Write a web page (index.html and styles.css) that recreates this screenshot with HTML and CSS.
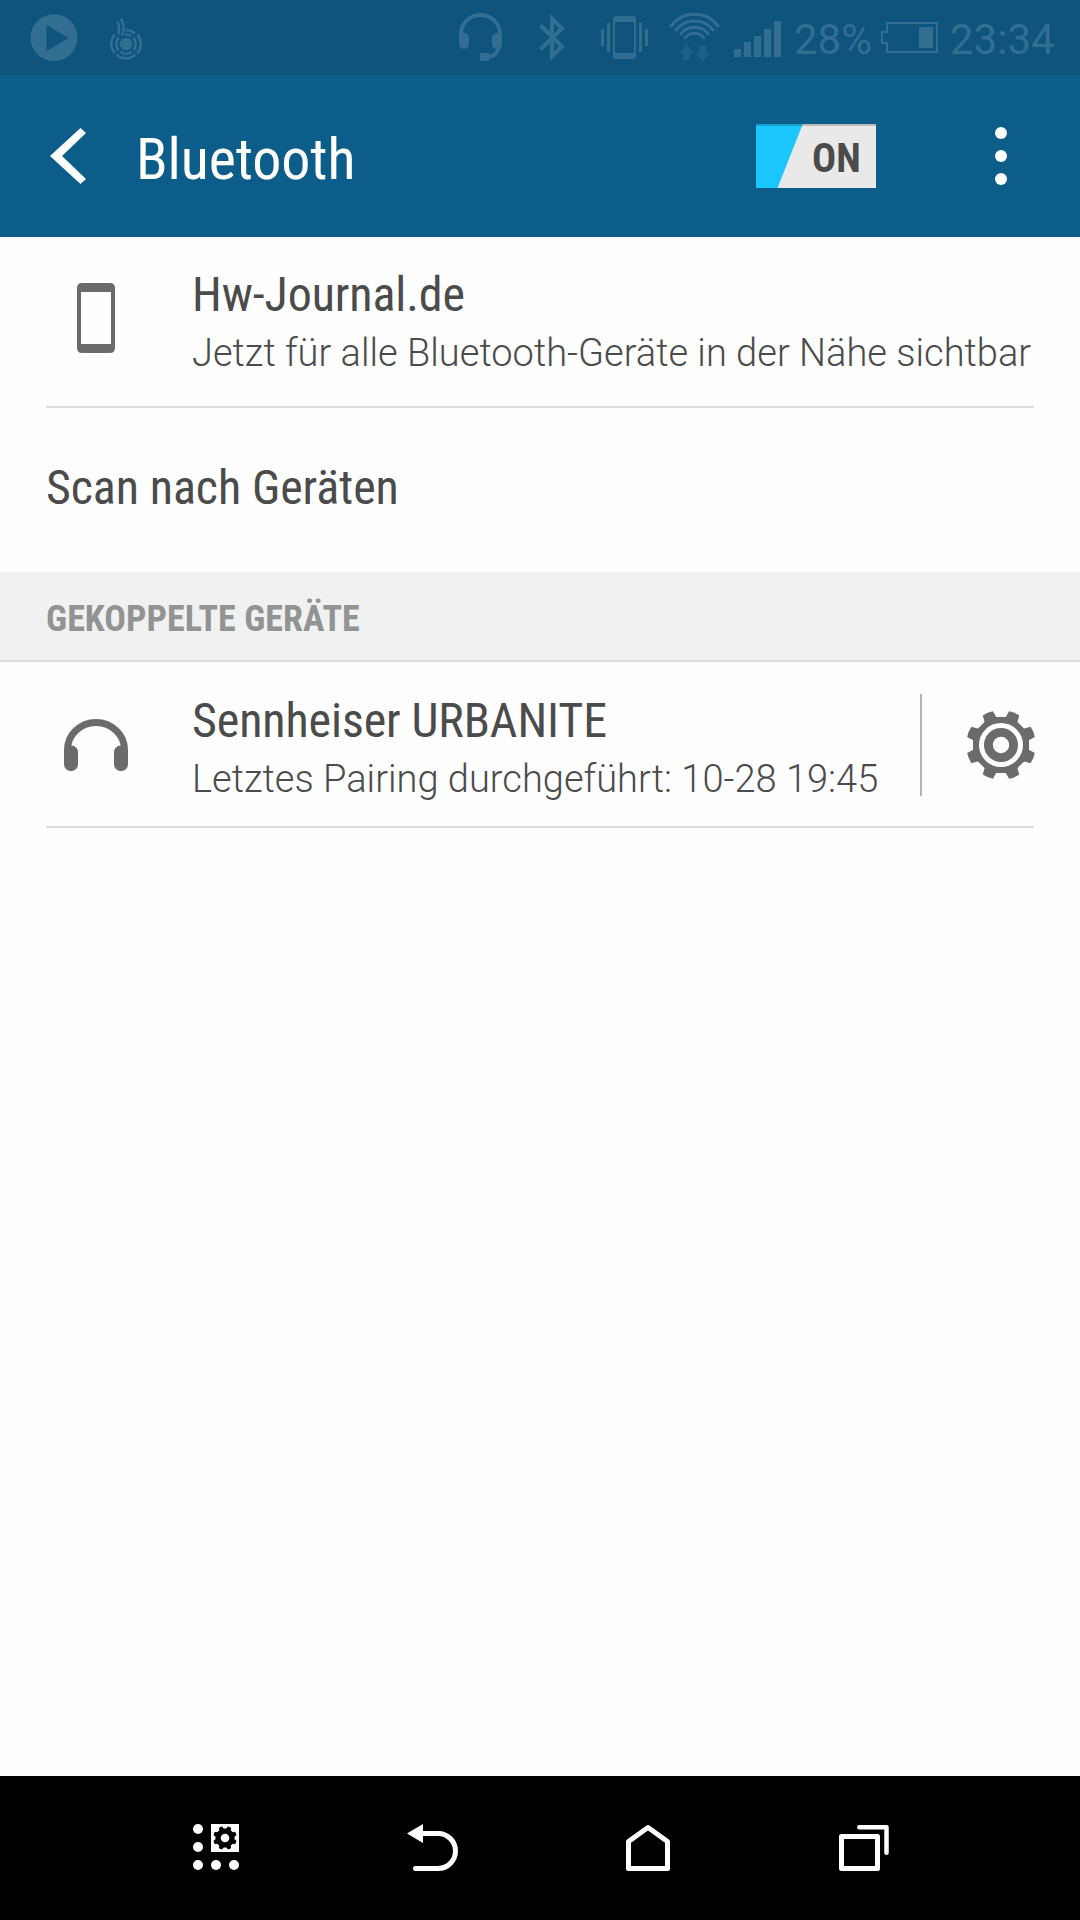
FILE: index.html
```html
<!doctype html>
<html lang="de">
  <head>
    <meta charset="utf-8">
    <meta name="viewport" content="width=device-width, initial-scale=1">
    <title>Bluetooth</title>
    <link rel="stylesheet" href="styles.css">
  </head>
  <body>
    <div class="status-bar">
      <svg class="play" width="48" height="75" viewBox="0 0 48 75">
        <path fill-rule="evenodd" d="M24 14.2a23.5 23.5 0 1 0 0 47a23.5 23.5 0 1 0 0-47zM16.5 25v26L38.5 38z"/>
      </svg>
      <svg class="burn" width="32" height="75" viewBox="0 0 32 75">
        <circle cx="16" cy="44" r="6.3"/>
        <g class="line ring">
          <path d="M8.600 37.700a9.700 9.700 0 0 0 0 12.600M10.200 51.800a9.700 9.700 0 0 0 11.600 0M23.400 50.300a9.700 9.700 0 0 0 0-12.600M15 34.600a9.700 9.700 0 0 1 6.400 1.200"/>
          <path d="M4.700 34.700a14.200 14.200 0 0 0 0 18.600M6.600 54.700a14.200 14.200 0 0 0 18.800 0M27.300 53.300a14.200 14.200 0 0 0 0-18.600M16 30a14.200 14.200 0 0 1 9 3.300"/>
          <path d="M7 21.500q3.500 5.500 1.300 12.500M10.800 18.500q5 8 1.200 17"/>
        </g>
      </svg>
      <div class="status-right">
        <svg class="headset" width="43" height="75" viewBox="0 0 43 75">
          <path class="line" d="M2 37v-3a19.5 19 0 0 1 39 0v9q-2 13-12 14"/>
          <rect x="0" y="33" width="10" height="16" rx="5"/>
          <rect x="33" y="33" width="10" height="16" rx="5"/>
          <rect x="21" y="53" width="9" height="8"/>
        </svg>
        <svg class="bt" width="27" height="75" viewBox="0 0 27 75">
          <path class="line" d="M1.5 25.5L23 46.500 13 56.500V18.500L23 28.500 1.500 49.500"/>
        </svg>
        <svg class="vibrate" width="47" height="75" viewBox="0 0 47 75">
          <path fill-rule="evenodd" d="M15 16h17q3 0 3 3v37q0 3-3 3H15q-3 0-3-3V19q0-3 3-3zM14 22v31h19V22z"/>
          <path d="M0 29h3v17H0zM6 23h3v29H6zM38 23h3v29h-3zM44 29h3v17h-3z"/>
        </svg>
        <svg class="wifi" width="51" height="75" viewBox="0 0 51 75">
          <path class="line thin" d="M1.300 27A29.500 29.500 0 0 1 49.700 27M6.300 31A23.300 23.300 0 0 1 44.700 31M11.200 34.800A17.400 17.400 0 0 1 39.800 34.800M15.500 38.500A12 12 0 0 1 35.500 38.500"/>
          <path class="dim" d="M17.700 44L25 53h-3.700v7H14v-7h-3.700zM30 46h7v7h4l-7.500 9-7.200-9H30z"/>
        </svg>
        <svg class="signal" width="47" height="75" viewBox="0 0 47 75">
          <path d="M0 49h7v8H0zM10 42h7v15h-7zM20 36h7v21h-7zM30 29h7v28h-7zM40 21h7v36h-7z"/>
        </svg>
        <span class="percent">28%</span>
        <svg class="battery" width="57" height="75" viewBox="0 0 57 75">
          <path class="line hair" d="M6 23h50v29H6v-9H1V32h5z"/>
          <path d="M38 27h14v21H38z"/>
        </svg>
        <span class="clock">23:34</span>
      </div>
    </div>

    <header>
      <svg class="back" width="36" height="56" viewBox="0 0 36 56">
        <path d="M0 28L30.500 0 36 5 12 28l24 23-5.500 5z"/>
      </svg>
      <h1>Bluetooth</h1>
      <div class="toggle"><span>ON</span></div>
      <svg class="more" width="12" height="58" viewBox="0 0 12 58">
        <circle cx="6" cy="6" r="6"/>
        <circle cx="6" cy="29" r="6"/>
        <circle cx="6" cy="52" r="6"/>
      </svg>
    </header>

    <main>
      <div class="row">
        <div class="icon">
          <svg width="38" height="70" viewBox="0 0 38 70">
            <path fill-rule="evenodd" d="M5 0h28q5 0 5 5v60q0 5-5 5H5q-5 0-5-5V5q0-5 5-5zM4 9v52h30V9z"/>
          </svg>
        </div>
        <div class="text">
          <div class="name">Hw-Journal.de</div>
          <div class="sub">Jetzt für alle Bluetooth-Geräte in der Nähe sichtbar</div>
        </div>
      </div>

      <div class="scan name">Scan nach Geräten</div>

      <h2>GEKOPPELTE GERÄTE</h2>

      <div class="row paired">
        <div class="icon">
          <svg width="64" height="52" viewBox="0 0 64 52">
            <path fill="none" stroke="#6b6b6b" stroke-width="7" d="M3.500 34v-3a28.500 27.500 0 0 1 57 0v3"/>
            <rect x="0" y="26.500" width="14" height="25.500" rx="6.500"/>
            <rect x="50" y="26.500" width="14" height="25.500" rx="6.500"/>
          </svg>
        </div>
        <div class="text">
          <div class="name">Sennheiser URBANITE</div>
          <div class="sub">Letztes Pairing durchgeführt: 10-28 19:45</div>
        </div>
        <div class="settings">
          <svg width="70" height="70" viewBox="-35 -35 70 70">
            <defs>
              <path id="teeth" d="M-5.500-34.300Q0-35.500 5.500-34.300L6.500-26 6.500 26 5.500 34.300Q0 35.500-5.500 34.300L-6.500 26-6.500-26z"/>
            </defs>
            <g id="cog">
              <use href="#teeth" transform="rotate(22.500)"/>
              <use href="#teeth" transform="rotate(67.500)"/>
              <use href="#teeth" transform="rotate(112.500)"/>
              <use href="#teeth" transform="rotate(157.500)"/>
              <path d="M-11.500-28h23L28-11.500v23L11.500 28h-23L-28 11.500v-23z"/>
            </g>
            <circle r="19.500" fill="#6b6b6b" stroke="#fff" stroke-width="5"/>
            <circle r="8.200" fill="#fff"/>
          </svg>
        </div>
      </div>
    </main>

    <nav>
      <svg width="72" height="72" viewBox="0 0 72 72">
        <circle cx="18" cy="17" r="5"/>
        <circle cx="18" cy="35" r="5"/>
        <circle cx="18" cy="53" r="5"/>
        <circle cx="36" cy="53" r="5"/>
        <circle cx="54" cy="53" r="5"/>
        <path d="M31 12h28v28H31z"/>
        <use class="hole" href="#cog" transform="translate(45 26) scale(.34)"/>
        <circle cx="45" cy="26" r="4.300"/>
      </svg>
      <svg width="72" height="72" viewBox="0 0 72 72">
        <path d="M11 21.500L27 12v19z"/>
        <path class="stroke" d="M25 21.500h17a17.500 17.500 0 0 1 0 35H19.500"/>
      </svg>
      <svg width="72" height="72" viewBox="0 0 72 72">
        <path class="stroke" d="M16.500 56.500V29.500L36 15.500l19.500 14v27z"/>
      </svg>
      <svg width="72" height="72" viewBox="0 0 72 72">
        <path class="stroke" d="M13.500 24.500h36v32h-36z"/>
        <path class="stroke narrow" d="M31.300 15.300h27.200v25.500"/>
      </svg>
    </nav>
  </body>
</html>
```
FILE: styles.css
```css
html, body {
  margin: 0;
  height: 100%;
}

body {
  display: flex;
  flex-direction: column;
  overflow: hidden;
  background-color: #fefefe;
  color: #4b4b4b;
  font-family: Roboto, sans-serif;
}

svg {
  display: block;
  flex: none;
}

/* status bar */
.status-bar {
  display: flex;
  align-items: center;
  flex: none;
  height: 75px;
  padding-left: 30px;
  box-sizing: border-box;
  background-color: #0e547d;
  color: #316e91;
  font-size: 42px;
  line-height: 75px;
  white-space: nowrap;
}

.status-bar svg {
  fill: #316e91;
}

.status-bar .line {
  fill: none;
  stroke: #316e91;
  stroke-width: 4;
}

.status-bar .thin {
  stroke-width: 3;
}

.status-bar .ring {
  stroke-width: 2.600;
}

.status-bar .hair {
  stroke-width: 2;
}

.status-bar .dim {
  fill: #1b6088;
}

.burn {
  margin-left: 32px;
}

.status-right {
  display: flex;
  margin-left: auto;
  width: 621px;
}

.bt {
  margin-left: 37px;
}

.vibrate {
  margin-left: 35px;
}

.wifi {
  margin-left: 21px;
}

.signal {
  margin-left: 14px;
}

.percent {
  width: 86px;
  margin-left: 13px;
  padding-top: 2px;
  height: 73px;
}

.battery {
  margin-left: 1px;
}

.clock {
  margin-left: 12px;
  padding-top: 2px;
  height: 73px;
}

/* title bar */
header {
  display: flex;
  align-items: center;
  flex: none;
  height: 162px;
  padding: 0 73px 0 50px;
  box-sizing: border-box;
  background-color: #0d5d8a;
  color: #fff;
}

header svg {
  fill: #fff;
}

h1 {
  flex: 1;
  margin: 0;
  padding: 6px 0 0 50px;
  font-size: 58px;
  font-weight: 400;
  font-stretch: 75%;
  letter-spacing: -.1px;
}

.toggle {
  width: 120px;
  height: 64px;
  margin-right: 119px;
  box-sizing: border-box;
  padding-left: 56px;
  background:
    linear-gradient(rgba(0, 0, 0, .2) 2px, transparent 2px),
    linear-gradient(111.500deg, #1bc6ff 43px, #e9e9e9 44px);
  color: #4b4b4b;
  font-size: 40px;
  font-weight: 700;
  font-stretch: 75%;
  line-height: 70px;
}

/* list */
main {
  flex: 1;
}

.row {
  display: flex;
  height: 169px;
  margin: 0 46px;
  border-bottom: 2px solid #dcdcdc;
}

.icon {
  display: flex;
  align-items: center;
  justify-content: center;
  width: 100px;
  margin: 0 46px 0 0;
  box-sizing: border-box;
  padding: 0 18px;
}

.icon svg {
  fill: #6b6b6b;
  margin-top: -7px;
}

.row .text {
  flex: 1;
  padding-top: 30px;
  white-space: nowrap;
}

.name {
  font-size: 48px;
  font-stretch: 75%;
  letter-spacing: -.1px;
  line-height: 56px;
}

.sub {
  margin-top: 5px;
  font-size: 38px;
  font-weight: 300;
  letter-spacing: .02px;
  line-height: 50px;
}

.scan {
  padding: 52px 46px 56px;
}

h2 {
  height: 88px;
  margin: 0;
  padding-left: 46px;
  border-bottom: 2px solid #dcdedd;
  background-color: #f0f2f1;
  color: #939393;
  font-size: 36px;
  font-weight: 700;
  font-stretch: 75%;
  letter-spacing: .06px;
  line-height: 95px;
}

.paired {
  height: 164px;
}

.paired .text {
  padding-top: 31px;
}

.paired .icon svg {
  margin-top: 2px;
}

.settings {
  align-self: flex-start;
  display: flex;
  align-items: center;
  justify-content: flex-end;
  width: 114px;
  height: 102px;
  margin: 32px -2px 0 0;
  border-left: 2px solid #b4b4b4;
}

.settings svg {
  fill: #6b6b6b;
}

/* navigation keys */
nav {
  display: flex;
  align-items: center;
  flex: none;
  gap: 144px;
  height: 144px;
  padding-left: 180px;
  background-color: #000;
}

nav svg {
  fill: #fff;
}

nav .hole {
  fill: #000;
}

nav .stroke {
  fill: none;
  stroke: #fff;
  stroke-width: 5;
  stroke-linecap: round;
  stroke-linejoin: round;
}

nav .narrow {
  stroke-width: 4.500;
}
```
